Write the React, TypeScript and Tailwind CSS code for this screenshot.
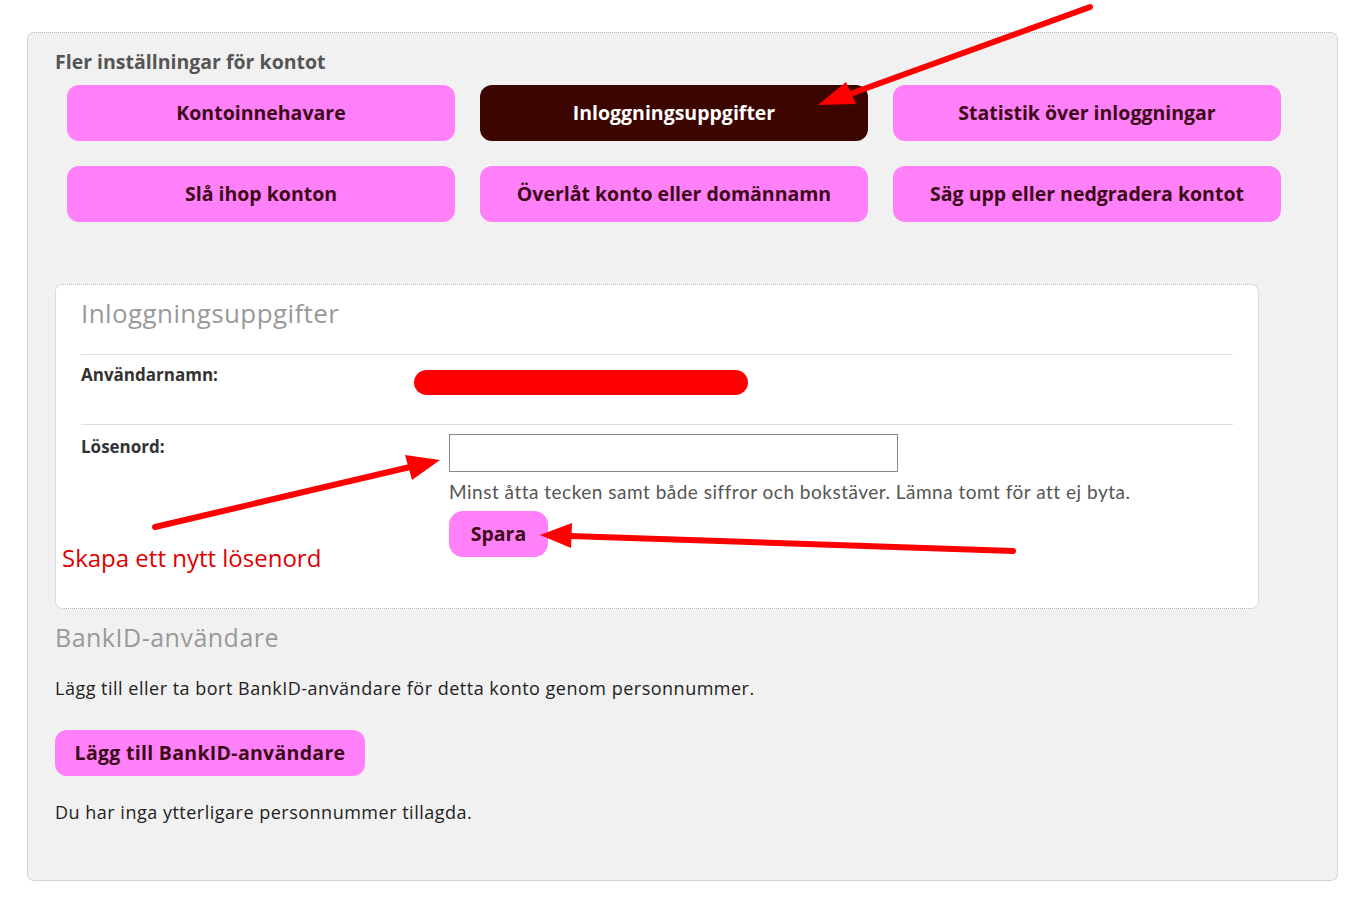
import React from "react";

const btn =
  "h-[56px] rounded-[12px] bg-[#ff80f8] text-[#3d0a1a] font-bold text-[19.5px] flex items-center justify-center";

export default function App() {
  return (
    <div
      className="relative w-[1368px] h-[906px] bg-white"
      style={{ fontFamily: "'Open Sans', sans-serif" }}
    >
      <div className="pt-[32px] pl-[27px]">
        <div className="w-[1311px] h-[849px] bg-[#f1f1f1] border border-dotted border-[#b5b5b5] rounded-[7px] pl-[27px] pt-[16px]">
          <div className="text-[19.5px] font-bold text-[#555] leading-[26px]">
            Fler inställningar för kontot
          </div>
          <div className="grid grid-cols-[388px_388px_388px] gap-x-[25px] gap-y-[25px] ml-[12px] mt-[10px]">
            <div className={btn}>Kontoinnehavare</div>
            <div className="h-[56px] rounded-[12px] bg-[#3d0500] text-white font-bold text-[19.5px] flex items-center justify-center">
              Inloggningsuppgifter
            </div>
            <div className={btn}>Statistik över inloggningar</div>
            <div className={btn}>Slå ihop konton</div>
            <div className={btn}>Överlåt konto eller domännamn</div>
            <div className={btn}>Säg upp eller nedgradera kontot</div>
          </div>

          <div className="mt-[62px] w-[1204px] h-[325px] bg-white border border-dotted border-[#b5b5b5] rounded-[8px] px-[25px] pt-[12px]">
            <div className="text-[26px] text-[#999] leading-[32px] font-normal tracking-[0.4px]">
              Inloggningsuppgifter
            </div>
            <div className="mt-[25px] border-t border-[#ddd] flex h-[70px] pt-[7px]">
              <div className="w-[368px] text-[17px] font-bold text-[#333]">Användarnamn:</div>
              <div className="relative w-[400px]"></div>
            </div>
            <div className="border-t border-[#ddd] flex pt-[9px]">
              <div className="w-[368px] text-[17px] font-bold text-[#333]">Lösenord:</div>
              <div className="flex flex-col">
                <div className="w-[449px] h-[38px] border border-[#888] bg-white"></div>
                <div
                  className="text-[19px] text-[#555] mt-[8px] leading-[24px] tracking-[0.5px]"
                  style={{ fontFamily: "Lato, 'Open Sans', sans-serif" }}
                >
                  Minst åtta tecken samt både siffror och bokstäver. Lämna tomt för att ej byta.
                </div>
                <div className="mt-[7px] w-[99px] h-[46px] rounded-[14px] bg-[#ff80f8] text-[#3d0a1a] font-bold text-[19.5px] flex items-center justify-center">
                  Spara
                </div>
              </div>
            </div>
          </div>

          <div className="mt-[12px] text-[25px] text-[#999] leading-[32px] tracking-[0.5px]">
            BankID-användare
          </div>
          <div className="mt-[24px] text-[18px] text-[#222] leading-[22px] tracking-[0.5px]">
            Lägg till eller ta bort BankID-användare för detta konto genom personnummer.
          </div>
          <div className="mt-[31px] w-[310px] h-[46px] rounded-[12px] bg-[#ff80f8] text-[#3d0a1a] font-bold text-[19.5px] tracking-[0.3px] flex items-center justify-center">
            Lägg till BankID-användare
          </div>
          <div className="mt-[25px] text-[18px] text-[#222] leading-[22px] tracking-[0.5px]">
            Du har inga ytterligare personnummer tillagda.
          </div>
        </div>
      </div>

      <div className="absolute left-[62px] top-[542px] text-[24px] text-[#e00000] leading-[32px]">
        Skapa ett nytt lösenord
      </div>

      <svg className="absolute inset-0 pointer-events-none" width="1368" height="906">
        <rect x="414" y="370" width="334" height="25" rx="12.5" fill="#ff0000" />
        <g stroke="#ff0000" strokeWidth="6" strokeLinecap="round" fill="none">
          <line x1="1090" y1="7" x2="850" y2="94" />
          <line x1="155" y1="527" x2="410" y2="467" />
          <line x1="1013" y1="551" x2="570" y2="536" />
        </g>
        <g fill="#ff0000">
          <polygon points="818,105 846,82 856,104" />
          <polygon points="440,460 405,455 412,480" />
          <polygon points="540,535 572,523 571,548" />
        </g>
      </svg>
    </div>
  );
}
